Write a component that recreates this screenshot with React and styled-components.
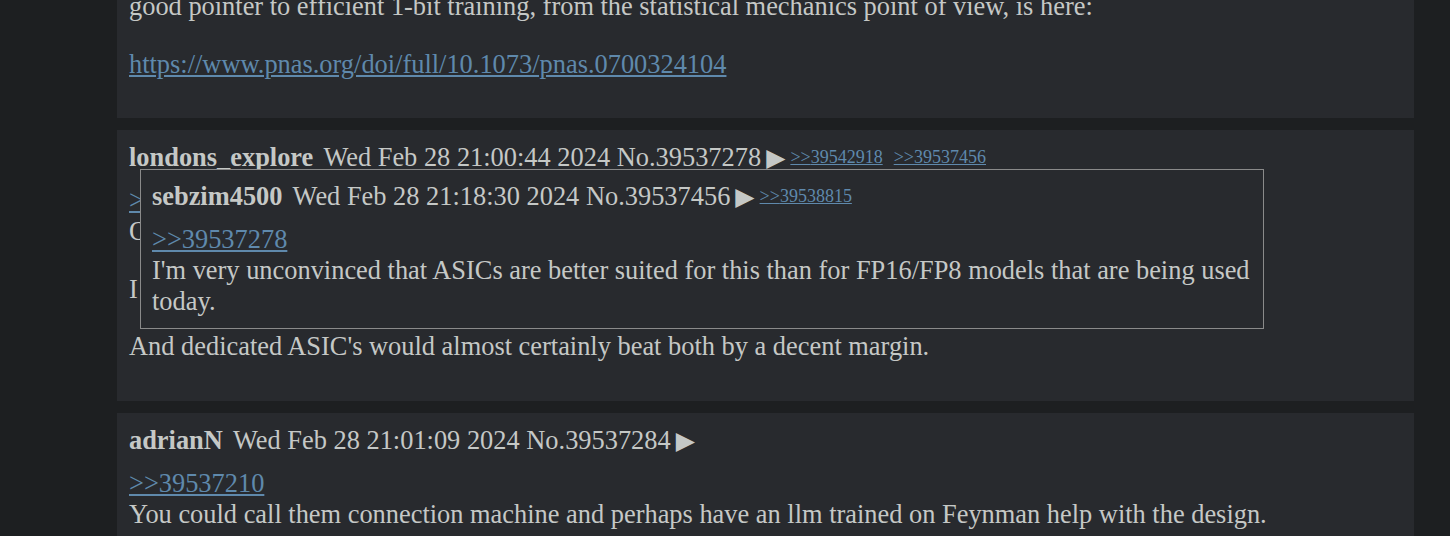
import React from "react";
import styled, { createGlobalStyle } from "styled-components";

const Global = createGlobalStyle`
  html, body { margin: 0; padding: 0; background: #1d1f21; }
  body { overflow: hidden; }
`;

const Page = styled.div`
  width: 1450px;
  height: 536px;
  overflow: hidden;
  background: #1d1f21;
  font-family: "Liberation Serif", "Times New Roman", serif;
  font-size: 26.4px;
  line-height: 31px;
  color: #c5c8c6;
`;

const Thread = styled.div`
  display: flex;
  flex-direction: column;
  gap: 12px;
  margin: -21px 36px 0 117px;
`;

const Post = styled.div`
  position: relative;
  background: #282a2e;
  padding: 12px;
`;

const Header = styled.div`
  height: 31px;
  margin-bottom: 12px;
  white-space: nowrap;
`;

const Name = styled.span`
  font-weight: bold;
  margin-right: 4px;
`;

const Arrow = styled.span`
  font-family: "DejaVu Sans", sans-serif;
  font-size: 25px;
  line-height: 1;
  margin-left: 5px;
  margin-right: 5px;
`;

const BackLink = styled.a`
  font-size: 18px;
  line-height: 1;
  vertical-align: 3px;
  color: #5f89ac;
  text-decoration: underline;
  margin-right: 11px;
`;

const Body = styled.div``;

const Para = styled.p`
  margin: 0 0 26.5px 0;
`;

const Line = styled.div``;

const QuoteLink = styled.a`
  color: #5f89ac;
  text-decoration: underline;
`;

const Popup = styled.div`
  position: absolute;
  left: 23px;
  top: 39px;
  width: 1100px;
  background: #282a2e;
  border: 1px solid #8a8a8a;
  padding: 11px;
  z-index: 2;
`;

const PopupBody = styled.div``;

function PostHeader({ name, date, no, links = [] }) {
  return (
    <Header>
      <Name>{name}</Name> {date} No.{no}
      <Arrow>▶</Arrow>
      {links.map((l) => (
        <BackLink key={l} href="#">&gt;&gt;{l}</BackLink>
      ))}
    </Header>
  );
}

export default function App() {
  return (
    <Page>
      <Global />
      <Thread>
        <Post>
          <Body>
            <Para>
              good pointer to efficient 1-bit training, from the statistical mechanics point of view, is here:
            </Para>
            <Para>
              <QuoteLink href="#">https://www.pnas.org/doi/full/10.1073/pnas.0700324104</QuoteLink>
            </Para>
          </Body>
        </Post>

        <Post>
          <PostHeader
            name="londons_explore"
            date="Wed Feb 28 21:00:44 2024"
            no="39537278"
            links={["39542918", "39537456"]}
          />
          <Body>
            <Para>
              <Line>
                <QuoteLink href="#">&gt;&gt;39537210</QuoteLink>
              </Line>
              <Line>Oh, I meant the hardware to train these models on.</Line>
            </Para>
            <Para>I think FP8 hardware is roughly as good.</Para>
            <Para>And dedicated ASIC's would almost certainly beat both by a decent margin.</Para>
          </Body>
          <Popup>
            <PostHeader
              name="sebzim4500"
              date="Wed Feb 28 21:18:30 2024"
              no="39537456"
              links={["39538815"]}
            />
            <PopupBody>
              <Line>
                <QuoteLink href="#">&gt;&gt;39537278</QuoteLink>
              </Line>
              <Line>
                I'm very unconvinced that ASICs are better suited for this than for FP16/FP8 models that are being used today.
              </Line>
            </PopupBody>
          </Popup>
        </Post>

        <Post>
          <PostHeader name="adrianN" date="Wed Feb 28 21:01:09 2024" no="39537284" />
          <Body>
            <Para>
              <Line>
                <QuoteLink href="#">&gt;&gt;39537210</QuoteLink>
              </Line>
              <Line>
                You could call them connection machine and perhaps have an llm trained on Feynman help with the design.
              </Line>
            </Para>
          </Body>
        </Post>
      </Thread>
    </Page>
  );
}
